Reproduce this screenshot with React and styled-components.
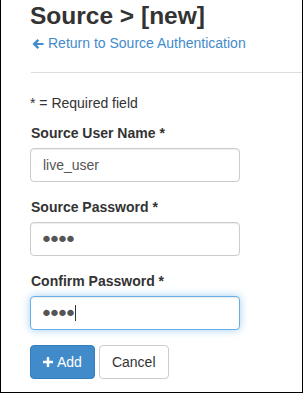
import React from "react";
import styled, { createGlobalStyle } from "styled-components";

const GlobalStyle = createGlobalStyle`
  html, body {
    margin: 0;
    padding: 0;
    background: #fff;
  }
  body {
    font-family: "Liberation Sans", Arial, Helvetica, sans-serif;
    font-size: 14px;
    line-height: 20px;
    color: #333;
  }
  * {
    box-sizing: border-box;
  }
`;

const Frame = styled.div`
  width: 303px;
  height: 393px;
  border-left: 1px solid #000;
  border-right: 1px solid #000;
  border-bottom: 1px solid #000;
  padding: 3px 0 0 29px;
  overflow: hidden;
`;

const Title = styled.h1`
  margin: 0;
  font-size: 24.5px;
  line-height: 26px;
  font-weight: bold;
  color: #333;
`;

const BackLink = styled.a`
  display: flex;
  align-items: center;
  gap: 4px;
  margin-top: 4px;
  padding-left: 2px;
  color: #428bca;
  text-decoration: none;
  font-size: 14px;
  line-height: 20px;
  svg {
    margin-top: 1px;
  }
`;

const Rule = styled.hr`
  margin: 19px 0 20px 1px;
  border: 0;
  border-top: 1px solid #ddd;
  height: 0;
`;

const Note = styled.p`
  margin: 0 0 10px;
`;

const FormGroup = styled.div`
  margin-bottom: 15px;
`;

const Label = styled.label`
  display: block;
  margin-bottom: 5px;
  font-weight: bold;
  padding-left: 1px;
`;

const Field = styled.div`
  position: relative;
  width: 210px;
`;

const Input = styled.input`
  display: block;
  width: 210px;
  height: 34px;
  padding: ${(p) => (p.type === "password" ? "6px 9px" : "6px 12px")};
  font-family: ${(p) =>
    p.type === "password" ? '"DejaVu Sans", sans-serif' : "inherit"};
  font-size: ${(p) => (p.type === "password" ? "22px" : "14px")};
  letter-spacing: ${(p) => (p.type === "password" ? "-5px" : "normal")};
  line-height: 20px;
  color: #555;
  background: #fff;
  border: 1px solid ${(p) => (p.$focused ? "#66afe9" : "#ccc")};
  border-radius: 4px;
  outline: 0;
  box-shadow: ${(p) =>
    p.$focused
      ? "inset 0 1px 1px rgba(0,0,0,.075), 0 0 8px rgba(102,175,233,.6)"
      : "inset 0 1px 1px rgba(0,0,0,.075)"};
`;

const Caret = styled.span`
  position: absolute;
  left: 45px;
  top: 9px;
  width: 1px;
  height: 16px;
  background: #333;
`;

const Buttons = styled.div`
  display: flex;
  gap: 4px;
`;

const Button = styled.button`
  display: inline-flex;
  align-items: center;
  gap: 4px;
  height: 34px;
  padding: 6px 12px;
  font-family: inherit;
  font-size: 14px;
  line-height: 20px;
  border-radius: 4px;
  border: 1px solid ${(p) => (p.$primary ? "#357ebd" : "#ccc")};
  background: ${(p) => (p.$primary ? "#428bca" : "#fff")};
  color: ${(p) => (p.$primary ? "#fff" : "#333")};
  cursor: pointer;
`;

function ArrowLeft() {
  return (
    <svg width="12" height="12" viewBox="0 0 12 12" aria-hidden="true">
      <path
        d="M0.5 6 L5.5 1 L7.2 2.7 L4.9 5 H11.5 V7 H4.9 L7.2 9.3 L5.5 11 Z"
        fill="#428bca"
      />
    </svg>
  );
}

function Plus() {
  return (
    <svg width="10" height="10" viewBox="0 0 10 10" aria-hidden="true">
      <path d="M3.8 0 H6.2 V3.8 H10 V6.2 H6.2 V10 H3.8 V6.2 H0 V3.8 H3.8 Z" fill="#fff" />
    </svg>
  );
}

export default function App() {
  return (
    <>
      <GlobalStyle />
      <Frame>
        <Title>Source &gt; [new]</Title>
        <BackLink href="#">
          <ArrowLeft />
          Return to Source Authentication
        </BackLink>
        <Rule />
        <Note>* = Required field</Note>
        <FormGroup>
          <Label>Source User Name *</Label>
          <Input type="text" defaultValue="live_user" />
        </FormGroup>
        <FormGroup>
          <Label>Source Password *</Label>
          <Input type="password" defaultValue="abcd" />
        </FormGroup>
        <FormGroup>
          <Label>Confirm Password *</Label>
          <Field>
            <Input type="password" defaultValue="abcd" $focused />
            <Caret />
          </Field>
        </FormGroup>
        <Buttons>
          <Button $primary type="button">
            <Plus />
            Add
          </Button>
          <Button type="button">Cancel</Button>
        </Buttons>
      </Frame>
    </>
  );
}
